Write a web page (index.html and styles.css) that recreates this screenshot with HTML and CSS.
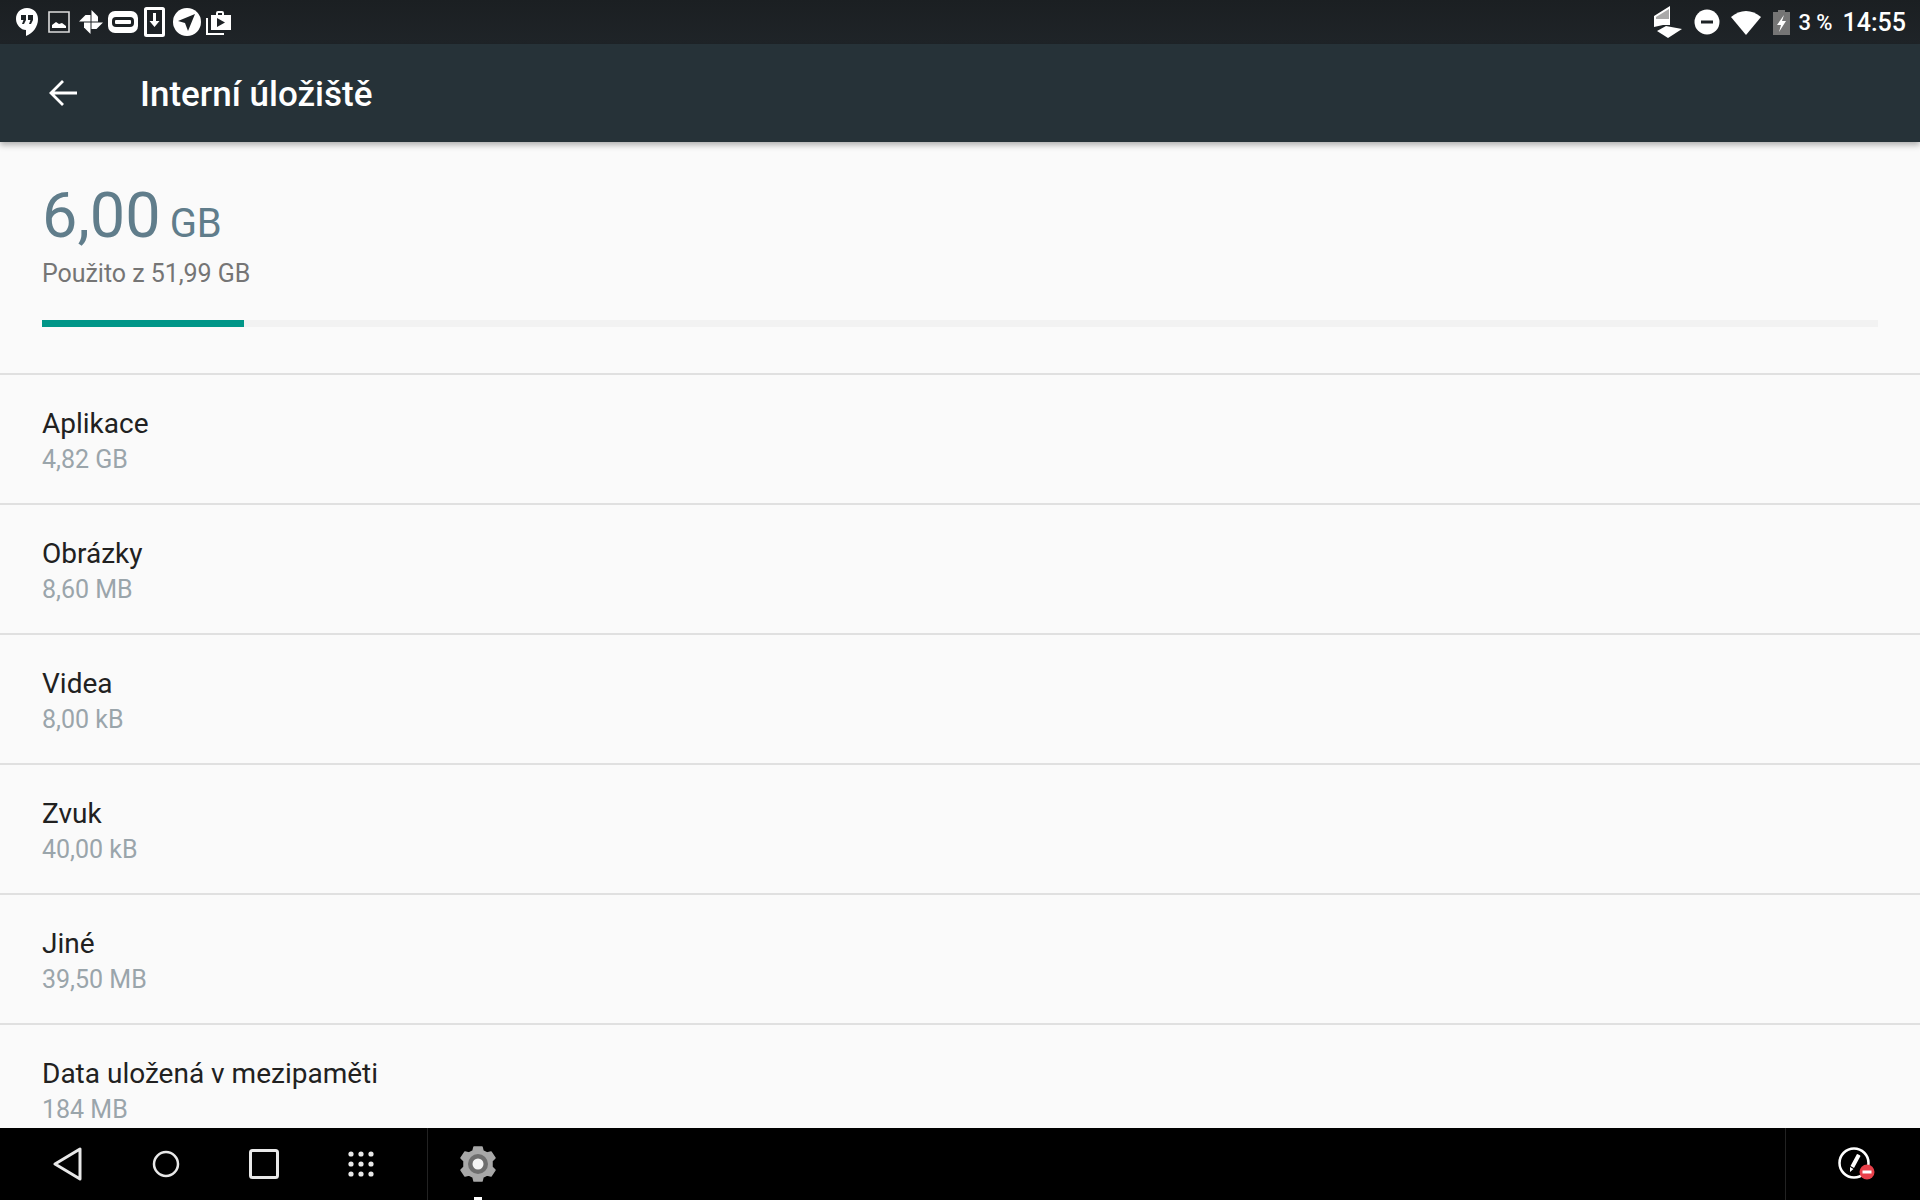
FILE: index.html
```html
<!DOCTYPE html>
<html>
<head>
  <title>Interní úložiště</title>
  <meta charset="utf-8">
  <link rel="stylesheet" href="styles.css">
</head>
<body>
  <div class="screen">
    <div class="status-bar">
      <div class="status-icons">
        <svg class="ic" width="24" height="30" viewBox="0 0 24 30"><path fill="#fff" d="M12 1C5 1 1 6 1 12s5 11 10 11v6c7-3 12-9 12-17C23 6 19 1 12 1z"/><path fill="#1d2225" d="M6 8h5v5l-2 4H7l1.500-4H6zM13 8h5v5l-2 4h-2l1.500-4H13z"/></svg>
        <svg class="ic ic-image" width="22" height="22" viewBox="0 0 22 22"><path fill="none" stroke="#ddd" stroke-width="1.600" d="M1 1h20v20H1z"/><path fill="#fff" d="M4 17v-3l4-3 3 2 3-1 4 3v2z"/></svg>
        <svg class="ic ic-wheel" width="26" height="26" viewBox="0 0 26 26" fill="#fff"><path d="M13.500 12.500V1l6.500 6.500v5z"/><path transform="rotate(90 13 13)" d="M13.500 12.500V1l6.500 6.500v5z"/><path transform="rotate(180 13 13)" d="M13.500 12.500V1l6.500 6.500v5z"/><path transform="rotate(270 13 13)" d="M13.500 12.500V1l6.500 6.500v5z"/></svg>
        <svg class="ic ic-pill" width="30" height="22" viewBox="0 0 30 22"><rect width="30" height="22" rx="7" fill="#fff"/><rect x="4" y="6" width="22" height="10" rx="4" fill="#1d2225"/><rect x="7" y="9" width="16" height="4" rx="1" fill="#fff"/></svg>
        <svg class="ic ic-down" width="21" height="30" viewBox="0 0 21 30"><rect x="1.500" y="1.500" width="18" height="27" rx="1" fill="none" stroke="#fff" stroke-width="3"/><path fill="#fff" d="M9 6h3v8h3.500l-5 6-5-6H9z"/></svg>
        <svg class="ic ic-send" width="28" height="28" viewBox="0 0 28 28"><circle cx="14" cy="14" r="14" fill="#fff"/><path fill="#1d2225" d="M5 13 22 6l-7 17-3-8z"/></svg>
        <svg class="ic ic-bag" width="26" height="25" viewBox="0 0 26 25"><path fill="none" stroke="#fff" stroke-width="2" d="M1 8v16h17"/><path fill="#fff" fill-rule="evenodd" d="M5 5h5V3a2 2 0 0 1 2-2h4a2 2 0 0 1 2 2v2h7v15H5zM12 5h4V3h-4zM11 8v9l8-4.500z"/></svg>
      </div>
      <div class="status-right">
        <svg class="ic" width="30" height="32" viewBox="0 0 30 32"><path fill="#fff" d="M16 0v19H9L0 21V10z"/><path fill="#a9a9a9" d="M15 3v10H2v-2z"/><path fill="#fff" d="M12 20l16 3-14 9-11-7z"/></svg>
        <svg class="ic" width="26" height="26" viewBox="0 0 26 26"><circle cx="13" cy="13" r="12.500" fill="#fff"/><rect x="7" y="11.500" width="12" height="3" fill="#1d2225"/></svg>
        <svg class="ic" width="32" height="25" viewBox="0 0 32 25"><path fill="#fff" d="M1 7C10-1 22-1 31 7L16 25z"/></svg>
        <svg class="ic ic-batt" width="17" height="25" viewBox="0 0 17 25"><path fill="#757575" d="M5 0h7v2h5v23H0V2h5z"/><path fill="#fff" d="M11 5 4 15h4l-2 7 7-11H9z"/></svg>
        <span class="battery-text">3 %</span>
        <span class="clock">14:55</span>
      </div>
    </div>

    <div class="toolbar">
      <svg class="back" width="34" height="30" viewBox="0 0 34 30"><path fill="none" stroke="#fff" stroke-width="2.800" d="M31 15H5M17 3 5 15l12 12"/></svg>
      <h1>Interní úložiště</h1>
    </div>

    <div class="content">
      <div class="summary">
        <div class="total"><span class="total-num">6,00</span><span class="total-unit">GB</span></div>
        <div class="used">Použito z 51,99 GB</div>
        <div class="track"><div class="fill"></div></div>
      </div>
      <div class="row">
        <div class="row-title">Aplikace</div>
        <div class="row-sub">4,82 GB</div>
      </div>
      <div class="row">
        <div class="row-title">Obrázky</div>
        <div class="row-sub">8,60 MB</div>
      </div>
      <div class="row">
        <div class="row-title">Videa</div>
        <div class="row-sub">8,00 kB</div>
      </div>
      <div class="row">
        <div class="row-title">Zvuk</div>
        <div class="row-sub">40,00 kB</div>
      </div>
      <div class="row">
        <div class="row-title">Jiné</div>
        <div class="row-sub">39,50 MB</div>
      </div>
      <div class="row">
        <div class="row-title">Data uložená v mezipaměti</div>
        <div class="row-sub">184 MB</div>
      </div>
    </div>

    <div class="nav-bar">
      <div class="nav-keys">
        <svg width="30" height="34" viewBox="0 0 30 34"><path fill="none" stroke="#e8e8e8" stroke-width="3" stroke-linejoin="round" d="M27 2v30L2 17z"/></svg>
        <svg width="28" height="28" viewBox="0 0 28 28"><circle cx="14" cy="14" r="12" fill="none" stroke="#e8e8e8" stroke-width="2.500"/></svg>
        <svg width="30" height="30" viewBox="0 0 30 30"><rect x="1.500" y="1.500" width="27" height="27" rx="2" fill="none" stroke="#e8e8e8" stroke-width="3"/></svg>
        <svg width="26" height="26" viewBox="0 0 26 26" fill="#e8e8e8"><circle cx="3" cy="3" r="2.600"/><circle cx="13" cy="3" r="2.600"/><circle cx="23" cy="3" r="2.600"/><circle cx="3" cy="13" r="2.600"/><circle cx="13" cy="13" r="2.600"/><circle cx="23" cy="13" r="2.600"/><circle cx="3" cy="23" r="2.600"/><circle cx="13" cy="23" r="2.600"/><circle cx="23" cy="23" r="2.600"/></svg>
      </div>
      <div class="nav-apps">
        <div class="nav-app">
          <svg width="36" height="36" viewBox="0 0 36 36"><path fill="#a8a8a8" stroke="#a8a8a8" stroke-width="1.500" stroke-linejoin="round" d="M14 1h8l1 4 4 2 4-1 4 6-3 3v6l3 3-4 6-4-1-4 2-1 4h-8l-1-4-4-2-4 1-4-6 3-3v-6l-3-3 4-6 4 1 4-2z"/><circle cx="18" cy="18" r="10" fill="#6e6e6e"/><circle cx="18" cy="18" r="5.500" fill="#f5f5f5"/></svg>
          <span class="running"></span>
        </div>
      </div>
      <div class="nav-tray">
        <svg width="40" height="36" viewBox="0 0 40 36"><circle cx="17" cy="17" r="14.500" fill="none" stroke="#fff" stroke-width="2.500"/><path fill="#fff" d="M20 8c1 0 3 1 3.500 2L17 22l-3.500-2zM13 21l3.500 2-3.500 3z"/><circle cx="30" cy="26" r="7.500" fill="#e8404a"/><rect x="25.500" y="24.500" width="9" height="3" fill="#fff"/></svg>
      </div>
    </div>
  </div>
</body>
</html>
```

FILE: styles.css
```css
body {
  margin: 0;
  font-family: Roboto, "Noto Sans", sans-serif;
  background-color: #000;
}
.screen {
  width: 1920px;
  height: 1200px;
  display: flex;
  flex-direction: column;
  overflow: hidden;
}
.status-bar {
  height: 44px;
  flex: none;
  display: flex;
  justify-content: space-between;
  align-items: center;
  padding: 0 14px 0 15px;
  background-image: linear-gradient(to bottom, #1b1f22, #1f2428);
  color: #fff;
}
.status-icons,
.status-right {
  display: flex;
  align-items: center;
}
.status-right {
  gap: 10px;
}
.ic {
  display: block;
}
.ic-image {
  margin-left: 9px;
}
.ic-wheel {
  margin-left: 8px;
}
.ic-pill {
  margin-left: 4px;
}
.ic-down {
  margin-left: 6px;
}
.ic-send {
  margin-left: 8px;
}
.ic-bag {
  margin-left: 5px;
}
.ic-batt {
  margin-left: 1px;
}
.battery-text {
  font-size: 22px;
  font-weight: 500;
  margin-left: -2px;
}
.clock {
  font-size: 25px;
  font-weight: 500;
  padding-top: 1px;
}
.toolbar {
  height: 98px;
  flex: none;
  display: flex;
  align-items: center;
  background-color: #263238;
  box-shadow: 0 3px 6px rgba(0, 0, 0, 0.3);
  position: relative;
  z-index: 1;
}
.back {
  margin-left: 46px;
  margin-right: 60px;
}
.toolbar h1 {
  margin: 0;
  padding-top: 2px;
  font-size: 35px;
  font-weight: 500;
  color: #fff;
}
.content {
  flex: 1;
  min-height: 0;
  overflow: hidden;
  background-color: #fafafa;
}
.summary {
  height: 233px;
  padding: 49px 42px 0;
  box-sizing: border-box;
  border-bottom: 2px solid #e0e0e0;
}
.total {
  display: flex;
  align-items: baseline;
  gap: 9px;
  color: #607d8b;
}
.total-num {
  font-size: 63px;
  line-height: 50px;
}
.total-unit {
  font-size: 40px;
  line-height: 50px;
}
.used {
  font-size: 25px;
  letter-spacing: -0.05px;
  color: #757575;
  margin-top: 9px;
  line-height: 32px;
}
.track {
  height: 7px;
  margin-top: 30px;
  background-color: #f2f2f2;
}
.fill {
  width: 202px;
  height: 7px;
  background-color: #009688;
}
.row {
  height: 130px;
  padding: 31px 42px 0;
  box-sizing: border-box;
  border-bottom: 2px solid #e0e0e0;
}
.row-title {
  font-size: 28px;
  line-height: 36px;
  color: #212121;
}
.row-sub {
  font-size: 25px;
  line-height: 36px;
  color: #9aa5ab;
}
.nav-bar {
  height: 72px;
  flex: none;
  display: flex;
  align-items: center;
  background-color: #000;
}
.nav-keys {
  width: 428px;
  height: 100%;
  display: flex;
  align-items: center;
  box-sizing: border-box;
  padding-left: 53px;
  gap: 69px;
  border-right: 1px solid #222;
}
.nav-apps {
  flex: 1;
  height: 100%;
  display: flex;
  padding-left: 32px;
}
.nav-app {
  position: relative;
  display: flex;
  align-items: center;
}
.running {
  position: absolute;
  left: 14px;
  bottom: 0;
  width: 8px;
  height: 3px;
  background-color: #fff;
}
.nav-tray {
  width: 135px;
  height: 100%;
  display: flex;
  align-items: center;
  box-sizing: border-box;
  padding-left: 51px;
  border-left: 1px solid #222;
}
```
